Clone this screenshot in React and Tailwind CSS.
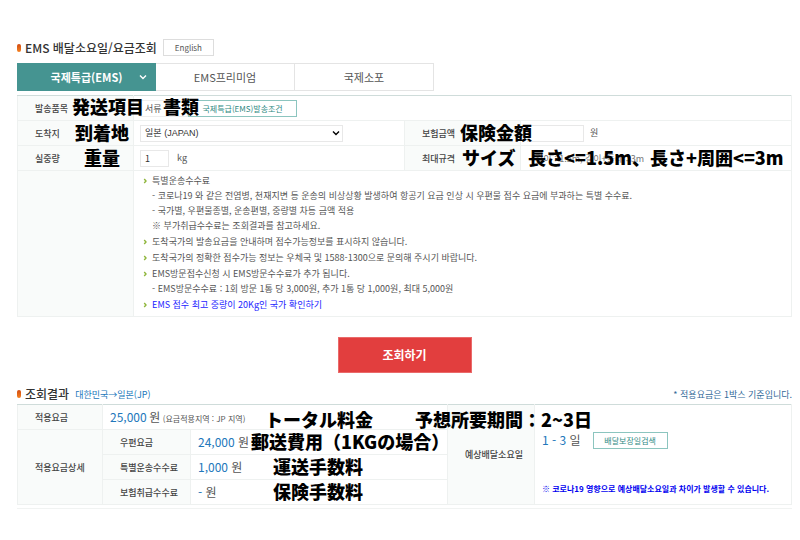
import clsx from 'clsx'

const notes = [
  {
    text: '특별운송수수료',
    lines: [
      '- 코로나19 와 같은 전염병, 천재지변 등 운송의 비상상황 발생하여 항공기 요금 인상 시 우편물 접수 요금에 부과하는 특별 수수료.',
      '- 국가별, 우편물종별, 운송편별, 중량별 차등 금액 적용',
      '※ 부가취급수수료는 조회결과를 참고하세요.',
    ],
  },
  { text: '도착국가의 발송요금을 안내하며 접수가능정보를 표시하지 않습니다.' },
  { text: '도착국가의 정확한 접수가능 정보는 우체국 및 1588-1300으로 문의해 주시기 바랍니다.' },
  {
    text: 'EMS방문접수신청 시 EMS방문수수료가 추가 됩니다.',
    lines: ['- EMS방문수수료 : 1회 방문 1통 당 3,000원, 추가 1통 당 1,000원, 최대 5,000원'],
  },
  { text: 'EMS 접수 최고 중량이 20Kg인 국가 확인하기', href: '#limit' },
]

// Japanese caption laid over a cell
function Caption({ className, children }) {
  return (
    <span
      lang="ja"
      className={clsx(
        'absolute z-10 whitespace-nowrap font-["Noto_Sans_CJK_JP",sans-serif] text-lg leading-5 font-black text-black',
        className
      )}
    >
      {children}
    </span>
  )
}

function Label({ className, children, ...props }) {
  return (
    <th
      scope="row"
      className={clsx('relative border border-[#eef1f0] bg-[#f9fbfa] text-left font-medium text-[#444]', className)}
      {...props}
    >
      {children}
    </th>
  )
}

function Cell({ className, children, ...props }) {
  return (
    <td className={clsx('relative border border-[#eef1f0]', className)} {...props}>
      {children}
    </td>
  )
}

function Title({ children }) {
  return (
    <h2 className="flex items-center gap-1 text-xs leading-4 font-medium text-[#333]">
      <span className="h-2 w-1 rounded-full bg-gradient-to-b from-[#d14a12] to-[#f58220]" />
      {children}
    </h2>
  )
}

function Chevron({ className }) {
  return (
    <svg viewBox="0 0 8 8" className={clsx('h-2 w-2', className)} fill="none" stroke="currentColor" strokeWidth="1.4">
      <path d="M1 2.5 4 5.5 7 2.5" />
    </svg>
  )
}

export default function App() {
  return (
    <main
      lang="ko"
      className='min-h-screen bg-white pt-[39px] pr-2 pb-8 pl-[17px] font-["Noto_Sans_CJK_KR",sans-serif] text-[9px] leading-[15px] text-[#555]'
    >
      <header className="flex items-center gap-[6px]">
        <Title>EMS 배달소요일/요금조회</Title>
        <button className="h-[17px] w-[51px] border border-[#ddd] text-[8px] leading-[15px] text-[#555]">English</button>
      </header>

      <nav className="mt-[7px] flex text-[11px] leading-4">
        <button className="relative h-7 w-[139px] bg-[#459491] font-bold text-white">
          국제특급(EMS)
          <Chevron className="absolute top-[10px] right-[9px]" />
        </button>
        <button className="h-7 w-[139px] border border-l-0 border-[#e4e4e4]">EMS프리미엄</button>
        <button className="h-7 w-[139px] border border-l-0 border-[#e4e4e4]">국제소포</button>
      </nav>

      <table className="mt-1 w-full table-fixed border-collapse border-t border-t-[#cfdcda]">
        <colgroup>
          <col className="w-[15%]" />
          <col className="w-[35%]" />
          <col className="w-[15%]" />
          <col className="w-[35%]" />
        </colgroup>
        <tbody>
          <tr className="h-[25px]">
            <Label className="border-t-[#cfdcda] pl-[17px]">
              <label htmlFor="item">발송품목</label>
              <Caption className="top-0 left-[54px]">発送項目</Caption>
            </Label>
            <Cell colSpan={3} className="border-t-[#cfdcda] pl-[6px]">
              <div className="flex">
                <select id="item" className="h-[17px] w-12 appearance-none border border-[#eee] pl-1 leading-[15px]">
                  <option>서류</option>
                </select>
                <button className="h-[17px] w-[109px] border border-[#8cc5bf] text-[8px] leading-[15px] text-[#2f8a83]">
                  국제특급(EMS)발송조건
                </button>
              </div>
              <Caption className="top-0 left-[29px]">書類</Caption>
            </Cell>
          </tr>
          <tr className="h-[25px]">
            <Label className="pl-[17px]">
              <label htmlFor="country">도착지</label>
              <Caption className="top-px left-[57px]">到着地</Caption>
            </Label>
            <Cell className="pl-[6px]">
              <div className="relative h-[17px] w-[203px]">
                <select
                  id="country"
                  className='h-full w-full appearance-none border border-[#e8e8e8] pl-1 font-["Liberation_Sans","Noto_Sans_CJK_KR",sans-serif] text-[9px] leading-[15px] text-[#333]'
                >
                  <option>일본 (JAPAN)</option>
                </select>
                <Chevron className="pointer-events-none absolute top-1 right-[3px] text-black" />
              </div>
            </Cell>
            <Label className="pl-[17px]">
              <label htmlFor="insured">보험금액</label>
              <Caption className="top-px left-[55px]">保険金額</Caption>
            </Label>
            <Cell className="pl-[6px]">
              <div className="flex gap-[6px]">
                <input id="insured" className="h-[17px] w-[57px] border border-[#e8e8e8]" />
                원
              </div>
            </Cell>
          </tr>
          <tr className="h-[25px]">
            <Label className="pl-[17px]">
              <label htmlFor="weight">실중량</label>
              <Caption className="top-px left-[66px]">重量</Caption>
            </Label>
            <Cell className="pl-[6px]">
              <div className="flex gap-2">
                <input id="weight" defaultValue="1" className="h-[17px] w-[29px] border border-[#e8e8e8] pl-1 text-[#333]" />
                kg
              </div>
            </Cell>
            <Label className="pl-[17px]">
              최대규격
              <Caption className="top-px left-[57px]">サイズ</Caption>
            </Label>
            <Cell className="pl-[14px] text-[#777]">
              길이 : 1.5m, 길이+둘레 : 3m
              <Caption className="top-px left-[7px]">長さ&lt;=1.5m、長さ+周囲&lt;=3m</Caption>
            </Cell>
          </tr>
          <tr>
            <Label />
            <Cell colSpan={3} className="pt-[2px] pr-2 pb-1 pl-[9px]">
              <ul className="flex flex-col gap-px">
                {notes.map((note) => (
                  <li key={note.text} className="flex gap-1">
                    <svg viewBox="0 0 5 15" className="h-[15px] w-[5px] shrink-0" fill="none" stroke="#8fb63c" strokeWidth="1.4">
                      <path d="M1.2 6 3 8 1.2 10" />
                    </svg>
                    <div>
                      {note.href ? (
                        <a href={note.href} className="text-[#1c1cff]">
                          {note.text}
                        </a>
                      ) : (
                        <p>{note.text}</p>
                      )}
                      {note.lines?.map((line) => (
                        <p key={line}>{line}</p>
                      ))}
                    </div>
                  </li>
                ))}
              </ul>
            </Cell>
          </tr>
        </tbody>
      </table>

      <button className="mx-auto mt-5 block h-9 w-[134px] border border-[#ea6a6a] bg-[#e23e3e] text-xs font-bold text-white">
        조회하기
      </button>

      <div className="mt-[13px] flex items-center gap-[6px]">
        <Title>조회결과</Title>
        <span className="text-[#2277bb]">대한민국→일본(JP)</span>
        <span className="ml-auto text-[#336a99]">* 적용요금은 1박스 기준입니다.</span>
      </div>

      <table className="mt-[2px] w-full table-fixed border-collapse">
        <colgroup>
          <col className="w-[85px]" />
          <col className="w-[88px]" />
          <col />
          <col className="w-[87px]" />
          <col />
        </colgroup>
        <tbody>
          <tr className="h-[25px]">
            <Label className="border-t-[#cfdcda] pl-[17px]">적용요금</Label>
            <Cell colSpan={2} className="border-t-[#cfdcda] pl-[7px]">
              <span className="text-xs text-[#2277bb]">25,000</span> <span className="text-xs">원</span>{' '}
              <span className="text-[8px]">(요금적용지역 : JP 지역)</span>
              <Caption className="top-1 left-[162px]">トータル料金</Caption>
              <Caption className="top-1 left-[312px]">予想所要期間：2~3日</Caption>
            </Cell>
            <Label rowSpan={4} className="border-t-[#cfdcda] pl-[17px]">
              예상배달소요일
            </Label>
            <Cell rowSpan={4} className="border-t-[#cfdcda] pt-[18px] pl-[7px]">
              <div className="flex items-center gap-3 text-xs">
                <span>
                  <span className="text-[#2277bb]">1 - 3</span> 일
                </span>
                <button className="h-[17px] w-[75px] border border-[#8cc5bf] text-[8px] leading-[15px] text-[#2f8a83]">
                  배달보장일검색
                </button>
              </div>
              <p className="mt-8 text-[8px] font-bold text-[#0000f0]">
                ※ 코로나19 영향으로 예상배달소요일과 차이가 발생할 수 있습니다.
              </p>
            </Cell>
          </tr>
          <tr className="h-[25px]">
            <Label rowSpan={3} className="pl-[17px]">
              적용요금상세
            </Label>
            <Label className="pl-[17px]">우편요금</Label>
            <Cell className="pl-[7px] text-xs">
              <span className="text-[#2277bb]">24,000</span> 원
              <Caption className="top-px left-[60px]">郵送費用（1KGの場合）</Caption>
            </Cell>
          </tr>
          <tr className="h-[25px]">
            <Label className="pl-[17px]">특별운송수수료</Label>
            <Cell className="pl-[7px] text-xs">
              <span className="text-[#2277bb]">1,000</span> 원
              <Caption className="top-px left-[82px]">運送手数料</Caption>
            </Cell>
          </tr>
          <tr className="h-[25px]">
            <Label className="pl-[17px]">보험취급수수료</Label>
            <Cell className="pl-[7px] text-xs">
              <span className="text-[#2277bb]">-</span> 원
              <Caption className="top-px left-[82px]">保険手数料</Caption>
            </Cell>
          </tr>
        </tbody>
      </table>
      <hr className="mt-[3px] border-[#f1f3f2]" />
    </main>
  )
}
